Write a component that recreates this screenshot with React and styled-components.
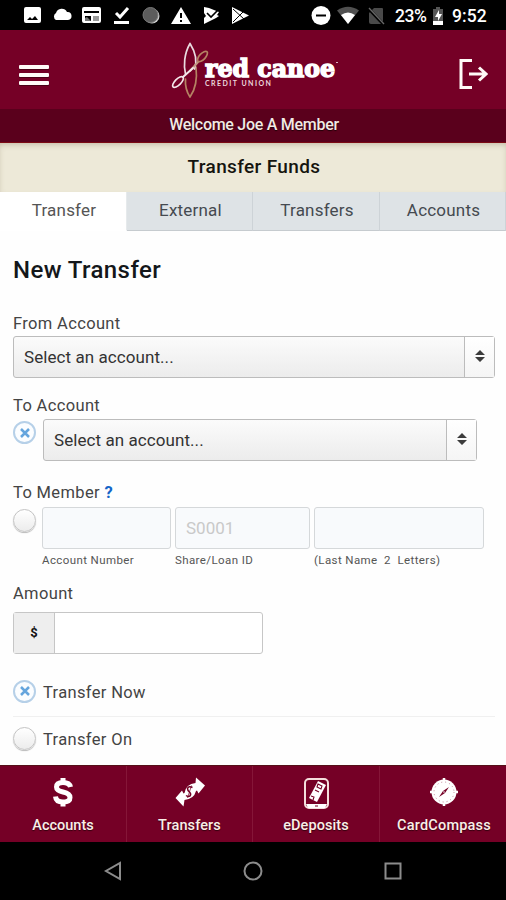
import React from 'react';
import styled, { createGlobalStyle } from 'styled-components';

const GlobalStyle = createGlobalStyle`
  * {
    box-sizing: border-box;
  }

  body {
    margin: 0;
    background: #fff;
    font-family: Roboto, "Liberation Sans", sans-serif;
  }
`;

const Screen = styled.div`
  width: 506px;
  height: 900px;
  display: flex;
  flex-direction: column;
  overflow: hidden;
  background: #fefefe;
`;

/* Android status bar */
const StatusBar = styled.div`
  height: 30px;
  flex-shrink: 0;
  display: flex;
  align-items: center;
  padding: 1px 19px 0 24px;
  background: #000;
  color: #fff;
`;

const StatusIcon = styled.svg`
  flex-shrink: 0;
  width: ${(props) => props.$w}px;
  height: 20px;
  margin-left: ${(props) => props.$gap || 0}px;
  fill: #fff;
`;

const StatusText = styled.span`
  width: ${(props) => props.$w}px;
  margin-left: ${(props) => props.$gap}px;
  font-size: 17.5px;
  font-weight: 500;
  line-height: 20px;
  white-space: nowrap;
  letter-spacing: ${(props) => props.$spacing || 0}px;
`;

/* App header */
const Header = styled.header`
  height: 79px;
  flex-shrink: 0;
  display: flex;
  align-items: center;
  justify-content: space-between;
  padding: 0 18px 0 19px;
  background: #750026;
`;

const MenuButton = styled.button`
  width: 30px;
  height: 20px;
  margin-top: 11px;
  padding: 0;
  border: 0;
  background: none;
  display: flex;
  flex-direction: column;
  justify-content: space-between;
`;

const MenuLine = styled.span`
  height: 4px;
  border-radius: 1px;
  background: #fffaf7;
  box-shadow: 0 1px 0 #4a0016;
`;

const Logo = styled.svg`
  width: 170px;
  height: 60px;
  margin-left: -3px;
`;

const LogoutIcon = styled.svg`
  width: 29px;
  height: 32px;
  margin-top: 8px;
  fill: none;
  stroke: #fffaf7;
  stroke-width: 3;
`;

const Welcome = styled.div`
  height: 34px;
  flex-shrink: 0;
  padding-left: 2px;
  background: #5a001c;
  border-bottom: 1px solid #7c0a14;
  color: #f3e9e4;
  font-size: 16px;
  font-weight: 500;
  letter-spacing: -0.28px;
  line-height: 31px;
  text-align: center;
  text-shadow: 0 1px 1px #200008;
`;

const TitleBar = styled.h1`
  height: 49px;
  flex-shrink: 0;
  margin: 0;
  padding-left: 2px;
  background: #ede9d8;
  box-shadow: inset 0 3px 6px -2px rgba(110, 90, 60, 0.35);
  color: #15150f;
  font-size: 19px;
  font-weight: 500;
  letter-spacing: 0.35px;
  line-height: 48px;
  text-align: center;
`;

const Tabs = styled.nav`
  height: 39px;
  flex-shrink: 0;
  display: grid;
  grid-template-columns: 127px 126px 127px 126px;
`;

const Tab = styled.a`
  padding-left: 2px;
  background: ${(props) => (props.$active ? '#fff' : '#dee3e6')};
  border-right: 1px solid ${(props) => (props.$active ? '#e6eaec' : '#cdd3d7')};
  border-bottom: 1px solid ${(props) => (props.$active ? '#fff' : '#c6cbcf')};
  color: ${(props) => (props.$active ? '#555' : '#454a50')};
  font-size: 17px;
  letter-spacing: 0.2px;
  line-height: 37px;
  text-align: center;
`;

/* Transfer form */
const Form = styled.main`
  flex: 1;
  min-height: 0;
  padding: 25px 11px 0 13px;
  overflow: hidden;
`;

const Heading = styled.h2`
  margin: 0 0 28px;
  color: #14171a;
  font-size: 24px;
  font-weight: 500;
  letter-spacing: 0.42px;
  line-height: 29px;
`;

const Label = styled.div`
  height: 22px;
  margin-top: ${(props) => props.$top || 0}px;
  color: #444;
  font-size: 16.5px;
  letter-spacing: 0.35px;
  line-height: 22px;
`;

const Help = styled.b`
  color: #1565c8;
`;

const Field = styled.div`
  display: flex;
  margin-top: ${(props) => props.$top || 0}px;
`;

const Select = styled.div`
  width: ${(props) => props.$w}px;
  height: 42px;
  display: flex;
  border: 1px solid #bcbcbc;
  border-radius: 3px;
  background: linear-gradient(#fbfbfb, #ececec);
`;

const SelectText = styled.span`
  flex: 1;
  padding-left: 10px;
  color: #333;
  font-size: 17px;
  letter-spacing: 0.07px;
  line-height: 41px;
`;

const SelectHandle = styled.span`
  width: 30px;
  display: flex;
  align-items: center;
  justify-content: center;
  padding-bottom: 2px;
  border-left: 1px solid #bcbcbc;
  background: linear-gradient(#fff, #f5f5f5);
`;

const Radio = styled.span`
  width: 23px;
  height: 23px;
  flex-shrink: 0;
  margin: 2px 7px 0 0;
  display: flex;
  align-items: center;
  justify-content: center;
  border: ${(props) => (props.$checked ? '2px solid #b6d0e8' : '1px solid #c4c4c4')};
  border-radius: 50%;
  background: ${(props) => (props.$checked ? '#fbfdff' : 'linear-gradient(#fff, #ececec)')};
  box-shadow: ${(props) => (props.$checked ? 'none' : '0 1px 1px #bbb')};
`;

const MemberFields = styled.div`
  display: grid;
  grid-template-columns: 129px 135px 170px;
  column-gap: 4px;
  margin-left: -1px;
`;

const MemberInput = styled.input`
  width: 100%;
  height: 42px;
  padding: 0 10px;
  border: 1px solid #d5d8da;
  border-radius: 3px;
  background: #f8fafc;
  font-family: inherit;
  font-size: 17px;

  &::placeholder {
    color: #c9c9c9;
  }
`;

const Hint = styled.div`
  margin-top: 4px;
  color: #555;
  font-size: 11.5px;
  letter-spacing: 0.4px;
  line-height: 15px;
  padding-bottom: 1px;
  white-space: pre;
`;

const AmountBox = styled.div`
  width: 250px;
  height: 42px;
  margin-top: 7px;
  display: flex;
  border: 1px solid #c6c6c6;
  border-radius: 3px;
  background: #fff;
`;

const Currency = styled.span`
  width: 41px;
  border-right: 1px solid #c6c6c6;
  background: #eee;
  color: #111;
  font-size: 13px;
  font-weight: 700;
  line-height: 39px;
  text-align: center;
`;

const Option = styled.div`
  height: 47px;
  display: flex;
  align-items: center;
  margin-top: ${(props) => props.$top || 0}px;
  padding-bottom: 1px;
  border-bottom: 1px solid #f0f0f0;
  color: #444;
  font-size: 16.5px;
  letter-spacing: 0.35px;

  &:last-child {
    border-bottom-color: transparent;
  }

  ${Radio} {
    margin-top: -3px;
  }
`;

/* Bottom app navigation */
const BottomNav = styled.nav`
  height: 77px;
  flex-shrink: 0;
  display: grid;
  grid-template-columns: 127px 126px 127px 126px;
  background: #750026;
  border-top: 1px solid #551018;
`;

const NavItem = styled.a`
  display: flex;
  flex-direction: column;
  align-items: center;
  padding-top: 8px;
  border-right: 1px solid #851638;
  color: #fbeee8;
  font-size: 14.5px;
  font-weight: 500;
  letter-spacing: ${(props) => props.$spacing || 0}px;
  line-height: 18px;
  text-shadow: 0 1px 1px #35000f;

  svg {
    width: 36px;
    height: 36px;
    margin-bottom: 7px;
  }

  &:last-child {
    padding-left: 2px;
    border-right: 0;
  }
`;

const SystemNav = styled.div`
  height: 58px;
  flex-shrink: 0;
  display: flex;
  align-items: center;
  justify-content: center;
  gap: 120px;
  background: #000;

  svg {
    width: 20px;
    height: 20px;
    fill: none;
    stroke: #8c8c8c;
    stroke-width: 2;
  }
`;

const StatusIcons = () => (
  <>
    <StatusIcon $w={17} viewBox="0 0 17 20">
      <path fillRule="evenodd" d="M2 1h13q2 0 2 2v12q0 2-2 2H2q-2 0-2-2V3q0-2 2-2zM3 14h11l-3-4-3 3-2-2z" />
    </StatusIcon>
    <StatusIcon $w={20} $gap={11} viewBox="0 0 20 20">
      <path d="M4 14a4 4 0 0 1 0-7 6 6 0 0 1 11-1 4 4 0 0 1 1 8z" />
    </StatusIcon>
    <StatusIcon $w={19} $gap={10} viewBox="0 0 19 20">
      <path fillRule="evenodd" d="M2 1h15q2 0 2 2v12q0 2-2 2H2q-2 0-2-2V3q0-2 2-2zM2 5v2h15V5zM3 10v5h6v-5z" />
      <path d="M3 12l2-1 4 4H3z" fill="#777" />
      <path d="M11 10h6v5h-6z" fill="#999" />
    </StatusIcon>
    <StatusIcon $w={17} $gap={12} viewBox="0 0 17 20">
      <path d="M3 7l4 4 8-9" fill="none" stroke="#fff" strokeWidth="3" />
      <path d="M1 15h15v3H1z" />
    </StatusIcon>
    <StatusIcon $w={18} $gap={12} viewBox="0 0 18 20">
      <circle cx="10" cy="10" r="7.5" fill="#ccc" />
      <circle cx="8.5" cy="9" r="7.5" fill="#5c5c5c" stroke="#777" />
    </StatusIcon>
    <StatusIcon $w={20} $gap={11} viewBox="0 0 20 20">
      <path fillRule="evenodd" d="M10 1l10 17H0zM9 7v5h2V7zM9 14v2h2v-2z" />
    </StatusIcon>
    <StatusIcon $w={17} $gap={12} viewBox="0 0 17 20">
      <path d="M1 1l5 1 10 4-2 3 2 1-3 2-12 6V12l2-2-2-3z" />
      <path d="M4 7l4 4 8-8" fill="none" stroke="#000" strokeWidth="1.6" />
    </StatusIcon>
    <StatusIcon $w={18} $gap={11} viewBox="0 0 18 20">
      <path d="M1 1l17 8.500L1 18z" />
      <path d="M2 3l11 10M2 16L13 5" fill="none" stroke="#000" strokeWidth="1" />
    </StatusIcon>
    <StatusIcon $w={20} $gap={62} viewBox="0 0 20 20">
      <circle cx="10" cy="9.500" r="9.500" />
      <path d="M5 8.500h10v2H5z" fill="#000" />
    </StatusIcon>
    <StatusIcon $w={22} $gap={6} viewBox="0 0 22 20">
      <path d="M0 4.500q11-7.500 22 0L11 18z" fill="#505050" />
      <path d="M4 9q7-5 14 0L11 18z" />
    </StatusIcon>
    <StatusIcon $w={17} $gap={9} viewBox="0 0 17 20">
      <path d="M6 2h8q1 0 1 1v15H3q-2 0-2-2V7z" fill="#4a4a4a" />
      <path d="M0 2l16 17" stroke="#000" strokeWidth="3" />
      <path d="M1 2l15 16" stroke="#686868" strokeWidth="1.3" />
    </StatusIcon>
  </>
);

const BrandLogo = () => (
  <Logo viewBox="0 0 170 60">
    <g fill="none" strokeWidth="1.7" strokeLinecap="round">
      <path d="M22 57C18 51 17 46 17.500 39M22 57C27 50 29.500 40 28 27" stroke="#b58263" />
      <path d="M22 3.500C16 14 15.500 26 17.500 34M22 3.500C28 13 29 22 26.500 29" stroke="#eadbe0" />
      <path d="M22 31L30 22" stroke="#c29a83" strokeWidth="2" />
      <ellipse cx="34.500" cy="16.500" rx="6.500" ry="3" transform="rotate(-47 34.5 16.5)" stroke="#b58263" />
      <ellipse cx="10" cy="42" rx="7" ry="3" transform="rotate(-45 10 42)" stroke="#f4e7ea" />
      <path d="M15 37L25 28" stroke="#f4e7ea" strokeWidth="2" />
    </g>
    <text x="37" y="37" textLength="130" lengthAdjust="spacingAndGlyphs" fill="#fff" stroke="#fff" strokeWidth="1.5" fontFamily="DejaVu Serif" fontWeight="700" fontSize="24">
      red canoe
    </text>
    <text x="37" y="45.500" textLength="66" fill="#ecd5dc" fontFamily="Lato" fontWeight="700" fontSize="7">
      CREDIT UNION
    </text>
    <path d="M168 22.500h2" stroke="#d9b3bf" />
  </Logo>
);

const Arrows = () => (
  <svg width="10" height="14" viewBox="0 0 10 14" fill="#3c3c3c">
    <path d="M5 1l5 5H0zM0 8h10l-5 5z" />
  </svg>
);

const AccountSelect = ({ width }) => (
  <Select $w={width}>
    <SelectText>Select an account...</SelectText>
    <SelectHandle>
      <Arrows />
    </SelectHandle>
  </Select>
);

const RadioMark = ({ checked }) => (
  <Radio $checked={checked}>
    {checked && (
      <svg width="10" height="10" viewBox="0 0 10 10" stroke="#65a5dd" strokeWidth="2.5">
        <path d="M1 1l8 8M9 1L1 9" />
      </svg>
    )}
  </Radio>
);

const DollarIcon = () => (
  <svg viewBox="0 0 36 36" fill="none" stroke="#fff" strokeWidth="5">
    <path d="M25.500 13Q24.500 8.500 18 8.500Q11.500 8.500 11.500 13Q11.500 16.500 18 18Q25 19.500 25 23.500Q25 28 18 28Q11 28 10.500 22.500" />
    <path d="M18 4v5M18 27v5.500" />
  </svg>
);

const TransferIcon = () => (
  <svg viewBox="0 0 36 36" fill="#fff">
    <path d="M24 3.500L33 11.500 26.500 19.500 25 16.500 24 17Q22 25 12.500 26L11.500 32.500 3.500 24 10 16.500 11.500 19.500 12.500 19Q14 10 23.500 9z" />
    <path d="M20.500 13.500q-4-2-5 1 0 2 2 3.500 2 2 .5 4-2 1-4-.5" fill="none" stroke="#750026" strokeWidth="1.5" />
    <path d="M19.500 11.500L15.500 24" fill="none" stroke="#750026" strokeWidth="0.7" />
  </svg>
);

const DepositIcon = () => (
  <svg viewBox="0 0 36 36">
    <rect x="7" y="5" width="23" height="29" rx="4" fill="none" stroke="#f4dedc" strokeWidth="2" />
    <path d="M8 30h21l-2 4H10z" fill="#fff" />
    <path d="M17 32h3" stroke="#750026" />
    <path d="M20 7l8 4-9 17-8-4z" fill="#fff" />
    <path d="M20 10l4 2-1 3-4-2zM17 16l4 2M13 22l3 1-1 3" fill="none" stroke="#750026" strokeWidth="1.1" />
  </svg>
);

const CompassIcon = () => (
  <svg viewBox="0 0 36 36">
    <circle cx="18" cy="18" r="12.500" fill="#fff" />
    <path d="M18 4v5M18 27v5M4 18h5M27 18h5" stroke="#fff" strokeWidth="2.500" />
    <circle cx="18" cy="18" r="10" fill="none" stroke="#b87a8d" strokeWidth="0.900" strokeDasharray="1 3" />
    <path d="M23 13l-4 6-6 4 4-6z" fill="#750026" />
    <circle cx="18" cy="18" r="0.800" fill="#fff" />
  </svg>
);

const App = () => {
  return (
    <Screen>
      <GlobalStyle />
      <StatusBar>
        <StatusIcons />
        <StatusText $w={34} $gap={10} $spacing={-0.5}>23%</StatusText>
        <StatusIcon $w={12} $gap={3} viewBox="0 0 12 20">
          <path d="M4 1h4v2h3v12H1V3h3z" fill="#555" />
          <path d="M1 15h10v4H1z" />
          <path d="M7 4L3 11h3v4l4-7H7z" />
        </StatusIcon>
        <StatusText $w={34} $gap={8} $spacing={0.1}>9:52</StatusText>
      </StatusBar>

      <Header>
        <MenuButton aria-label="Menu">
          <MenuLine />
          <MenuLine />
          <MenuLine />
        </MenuButton>
        <BrandLogo />
        <LogoutIcon viewBox="0 0 29 32">
          <path d="M13 2.500H2v27h11" />
          <path d="M10 16h17M20 9.500l7 6.500-7 6.500" />
        </LogoutIcon>
      </Header>
      <Welcome>Welcome Joe A Member</Welcome>
      <TitleBar>Transfer Funds</TitleBar>
      <Tabs>
        <Tab $active>Transfer</Tab>
        <Tab>External</Tab>
        <Tab>Transfers</Tab>
        <Tab>Accounts</Tab>
      </Tabs>

      <Form>
        <Heading>New Transfer</Heading>

        <Label>From Account</Label>
        <Field $top={1}>
          <AccountSelect width={482} />
        </Field>

        <Label $top={17}>To Account</Label>
        <Field $top={2}>
          <RadioMark checked />
          <AccountSelect width={434} />
        </Field>

        <Label $top={21}>
          To Member <Help>?</Help>
        </Label>
        <Field $top={3}>
          <RadioMark />
          <MemberFields>
            <div>
              <MemberInput />
              <Hint>Account Number</Hint>
            </div>
            <div>
              <MemberInput placeholder="S0001" />
              <Hint>Share/Loan ID</Hint>
            </div>
            <div>
              <MemberInput />
              <Hint>{'(Last Name  2  Letters)'}</Hint>
            </div>
          </MemberFields>
        </Field>

        <Label $top={14}>Amount</Label>
        <AmountBox>
          <Currency>$</Currency>
        </AmountBox>

        <Option $top={16}>
          <RadioMark checked />
          Transfer Now
        </Option>
        <Option>
          <RadioMark />
          Transfer On
        </Option>
      </Form>

      <BottomNav>
        <NavItem>
          <DollarIcon />
          Accounts
        </NavItem>
        <NavItem $spacing={0.1}>
          <TransferIcon />
          Transfers
        </NavItem>
        <NavItem $spacing={0.1}>
          <DepositIcon />
          eDeposits
        </NavItem>
        <NavItem $spacing={0.2}>
          <CompassIcon />
          CardCompass
        </NavItem>
      </BottomNav>

      <SystemNav>
        <svg viewBox="0 0 20 20">
          <path d="M17 2v16L3 10z" />
        </svg>
        <svg viewBox="0 0 20 20">
          <circle cx="10" cy="10" r="8.500" />
        </svg>
        <svg viewBox="0 0 20 20">
          <rect x="2.500" y="2.500" width="15" height="15" />
        </svg>
      </SystemNav>
    </Screen>
  );
};

export default App;
